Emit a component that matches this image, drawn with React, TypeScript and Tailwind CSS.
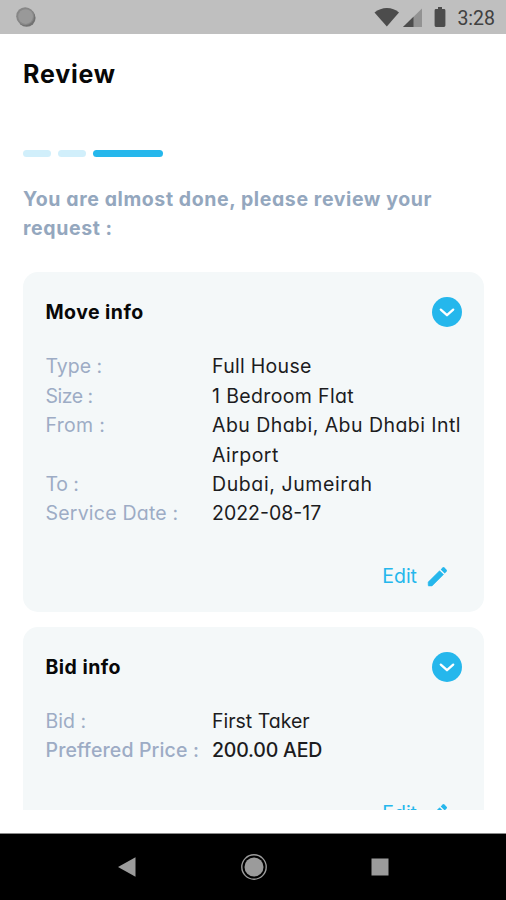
import { clsx } from 'clsx'

interface Entry {
  label: string
  value: string
  labelClass?: string
  valueClass?: string
}

const MOVE_INFO: Entry[] = [
  { label: 'Type :', value: 'Full House', valueClass: 'tracking-[0.3px]' },
  { label: 'Size :', value: '1 Bedroom Flat', labelClass: 'tracking-[-0.5px]', valueClass: 'tracking-[0.36px]' },
  { label: 'From :', value: 'Abu Dhabi, Abu Dhabi Intl Airport', labelClass: 'tracking-[0.3px]', valueClass: 'tracking-[0.45px]' },
  { label: 'To :', value: 'Dubai, Jumeirah', labelClass: 'tracking-[-0.2px]', valueClass: 'tracking-[0.6px]' },
  { label: 'Service Date :', value: '2022-08-17', labelClass: 'tracking-[0.22px]' },
]

const BID_INFO: Entry[] = [
  { label: 'Bid :', value: 'First Taker' },
  {
    label: 'Preffered Price :',
    value: '200.00 AED',
    labelClass: 'font-medium tracking-[0.15px]',
    valueClass: 'font-medium tracking-[-0.2px]',
  },
]

function StatusBar() {
  return (
    <div className="flex h-[34px] shrink-0 items-center bg-[#bfbfbf] pl-4 pr-[11px]">
      <svg width="20" height="20" viewBox="0 0 20 20">
        <circle cx="10.6" cy="10.8" r="9" fill="#727272" />
        <circle cx="9.2" cy="9.2" r="9" fill="#878787" />
        <circle cx="9.6" cy="9.6" r="7.4" fill="#999" />
      </svg>

      <svg className="ml-auto" width="76" height="22" viewBox="0 0 76 22" fill="#4c4c4c">
        {/* wifi */}
        <path d="M0.5 6.4C7.5 0.4 18.5 0.4 25 6.4L12.8 20.6Z" />
        {/* mobile signal */}
        <path d="M48 2.5V21H29Z" fill="#929292" />
        <path d="M39.5 10.8V21H29Z" />
        {/* battery */}
        <path d="M64 1h4v2h2a1.4 1.4 0 0 1 1.4 1.4V19.6a1.4 1.4 0 0 1-1.4 1.4h-8a1.4 1.4 0 0 1-1.4-1.4V4.4A1.4 1.4 0 0 1 62 3H64Z" />
      </svg>
      <span className="ml-[7px] mt-[3px] font-['Roboto',sans-serif] text-[19.5px] leading-none text-[#404040]">
        3:28
      </span>
    </div>
  )
}

function InfoCard({ title, entries }: { title: string; entries: Entry[] }) {
  return (
    <section className="rounded-[15px] bg-[#f4f8f9] pb-5 pl-[22.5px] pr-[22px] pt-[25px]">
      <div className="flex h-[30px] items-center justify-between">
        <h2 className="whitespace-nowrap pt-px text-[19.5px] font-bold tracking-[0.45px] text-[#080808]">{title}</h2>
        <svg width="30" height="30" viewBox="0 0 30 30" fill="none">
          <circle cx="15" cy="15" r="15" fill="#25b7ec" />
          <path d="M8.8 12.6L15 18.2L21.2 12.6" stroke="#fff" strokeWidth="2.3" strokeLinecap="round" strokeLinejoin="round" />
        </svg>
      </div>

      <dl className="mt-[25px] text-[19.5px] leading-[29.4px]">
        {entries.map((e) => (
          <div key={e.label} className="flex">
            <dt className={clsx('w-[166.5px] shrink-0 whitespace-nowrap text-[#9dacc5]', e.labelClass)}>{e.label}</dt>
            <dd className={clsx('-mr-2 text-[#1c1c1e]', e.valueClass)}>{e.value}</dd>
          </div>
        ))}
      </dl>

      <div className="mt-[33px] flex h-[30px] items-center justify-end gap-[10px] pr-[14px] text-[#25b7ec]">
        <span className="text-[19.5px]">Edit</span>
        <svg width="21" height="21" viewBox="0 0 21 21" fill="currentColor">
          <path d="M1.2 19.5v-3.4L12.6 4.7l3.9 3.9L5 19.9H1.6Z" stroke="currentColor" strokeWidth="0.6" strokeLinejoin="round" />
          <path d="M13.7 3.4L15.6 1.5a1.3 1.3 0 0 1 1.8 0l2.2 2.2a1.3 1.3 0 0 1 0 1.8l-1.9 1.9Z" />
        </svg>
      </div>
    </section>
  )
}

function NavBar() {
  return (
    <div className="flex h-[67px] shrink-0 items-center justify-between border-t border-[#8a8a8a] bg-black px-[117px]">
      <svg width="20" height="20" viewBox="0 0 20 20" fill="#9b9b9b">
        <path d="M1 10L18.5 0.3V19.7Z" />
      </svg>
      <svg className="-ml-px" width="28" height="28" viewBox="0 0 28 28">
        <circle cx="14" cy="14" r="12.2" fill="none" stroke="#9b9b9b" strokeWidth="1.4" />
        <circle cx="14" cy="14" r="9.5" fill="#9b9b9b" />
      </svg>
      <svg width="18" height="18" viewBox="0 0 18 18">
        <rect x="0.5" y="0.5" width="17" height="17" fill="#9b9b9b" />
      </svg>
    </div>
  )
}

export default function App() {
  return (
    <div className="flex h-[900px] w-[506px] flex-col overflow-hidden bg-white font-['Inter',sans-serif] [font-feature-settings:'cv11']">
      <StatusBar />

      <main className="flex min-h-0 flex-1 flex-col pb-[23px] pl-[23px] pr-[22px]">
        <h1 className="mt-[22px] text-[25px] leading-9 font-bold tracking-[0.8px] text-[#080808]">Review</h1>

        {/* step 3 of 3 */}
        <div className="mt-[58px] flex h-[7px] gap-[7px]">
          <span className="w-7 rounded-full bg-[#d1effb]" />
          <span className="w-7 rounded-full bg-[#d1effb]" />
          <span className="w-[70px] rounded-full bg-[#25b7ec]" />
        </div>

        <p className="mt-7 text-[19.5px] leading-[29.4px] font-bold tracking-[0.6px] text-[#94a7be]">
          You are almost done, please review your request :
        </p>

        <div className="mt-[28.5px] min-h-0 flex-1 space-y-[15px] overflow-hidden">
          <InfoCard title="Move info" entries={MOVE_INFO} />
          <InfoCard title="Bid info" entries={BID_INFO} />
        </div>
      </main>

      <NavBar />
    </div>
  )
}
